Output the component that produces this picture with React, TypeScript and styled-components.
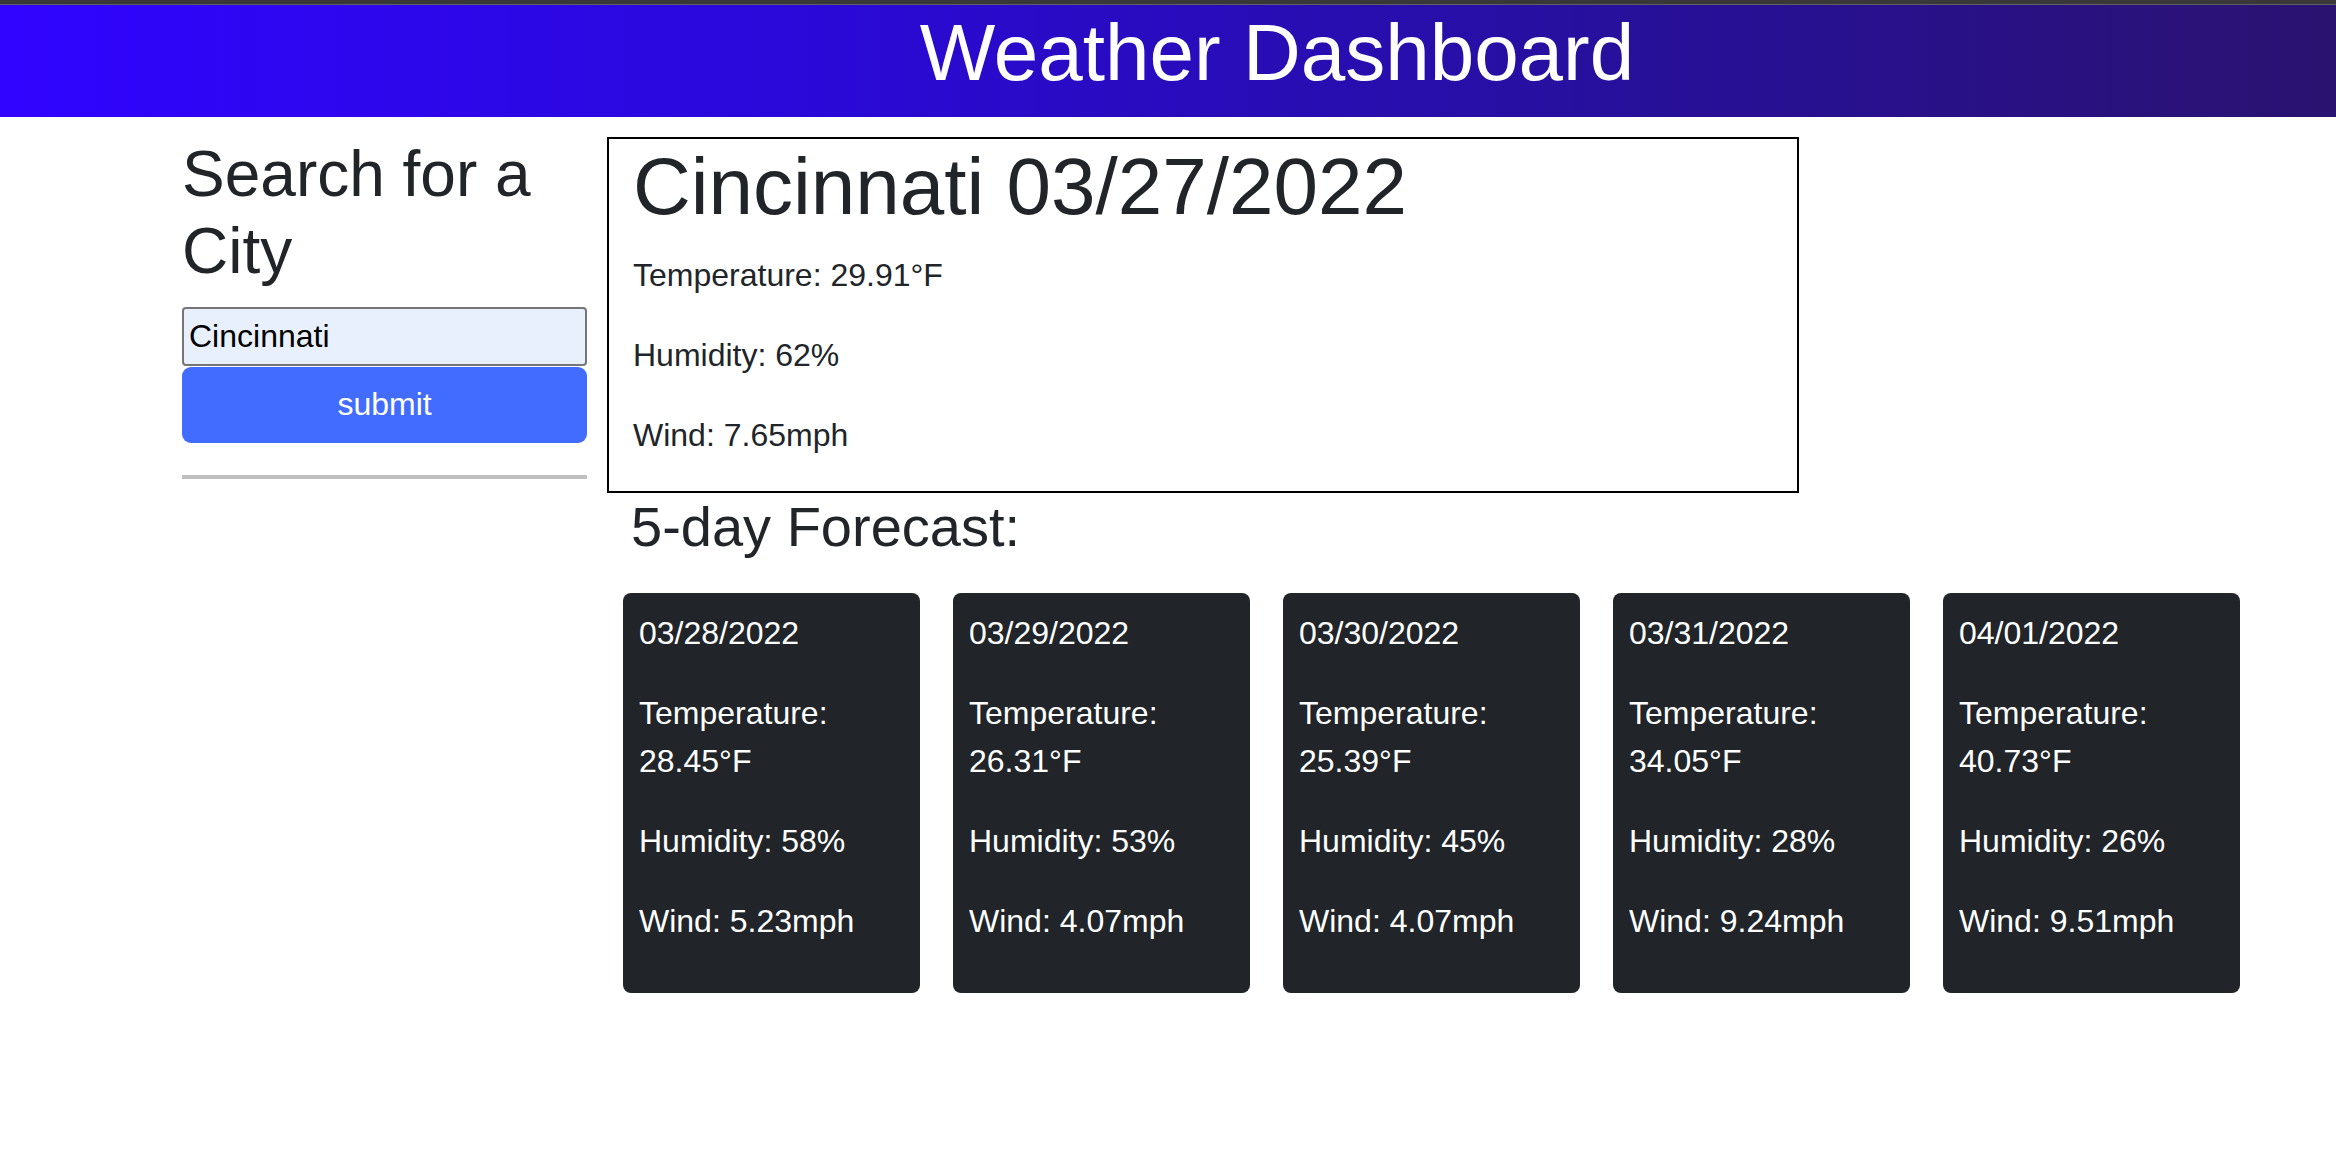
import React from "react";
import styled, { createGlobalStyle } from "styled-components";

const GlobalStyle = createGlobalStyle`
  html, body {
    margin: 0;
    padding: 0;
    background: #ffffff;
  }
  body {
    font-family: "Liberation Sans", Arial, sans-serif;
    font-size: 32px;
    line-height: 1.5;
    color: #212529;
  }
  * { box-sizing: border-box; }
`;

const Page = styled.div`
  width: 2336px;
  min-height: 1150px;
  background: #ffffff;
`;

const TopStrip = styled.div`
  height: 5px;
  background: #383838;
  border-bottom: 1px solid #5f5f66;
`;

const Header = styled.header`
  height: 112px;
  background: linear-gradient(to right, #3004ff 0%, #2a09d8 35%, #27109a 70%, #2a1270 100%);
  padding-left: 218px;
  text-align: center;
`;

const Title = styled.h1`
  margin: 0;
  font-size: 80px;
  font-weight: 400;
  line-height: 1.2;
  color: #ffffff;
`;

const Main = styled.main`
  display: flex;
  align-items: flex-start;
  gap: 20px;
  padding-left: 182px;
`;

const Sidebar = styled.aside`
  width: 405px;
  display: flex;
  flex-direction: column;
`;

const SearchHeading = styled.h2`
  margin: 19px 0 17px;
  font-size: 64px;
  font-weight: 400;
  line-height: 1.2;
`;

const CityInput = styled.input`
  height: 59px;
  width: 100%;
  border: 2px solid #767676;
  border-radius: 4px;
  background: #e8f0fe;
  padding: 0 5px;
  font-family: "Liberation Sans", Arial, sans-serif;
  font-size: 32px;
  color: #000000;
  outline: none;
`;

const SubmitButton = styled.button`
  margin-top: 1px;
  height: 76px;
  width: 100%;
  border: none;
  border-radius: 9px;
  background: #416cff;
  color: #ffffff;
  font-family: "Liberation Sans", Arial, sans-serif;
  font-size: 32px;
  cursor: pointer;
`;

const Divider = styled.hr`
  margin: 32px 0 0;
  border: none;
  height: 4px;
  background: #c0c0c0;
`;

const Content = styled.section`
  display: flex;
  flex-direction: column;
`;

const CurrentBox = styled.div`
  margin-top: 20px;
  width: 1192px;
  border: 2px solid #000000;
  padding: 0 24px;
`;

const CityTitle = styled.h1`
  margin: 0 0 16px;
  font-size: 80px;
  font-weight: 400;
  line-height: 1.2;
`;

const Stat = styled.p`
  margin: 0 0 32px;
  font-size: 32px;
  line-height: 48px;
`;

const ForecastHeading = styled.h3`
  margin: 0 0 33px;
  padding-left: 24px;
  font-size: 56px;
  font-weight: 400;
  line-height: 1.2;
`;

const CardRow = styled.div`
  display: flex;
  gap: 33px;
  margin-left: 16px;
`;

const Card = styled.div`
  width: 297px;
  height: 400px;
  background: #212529;
  color: #ffffff;
  border-radius: 8px;
  padding: 16px;
`;

const CardLine = styled.p`
  margin: 0 0 32px;
  font-size: 32px;
  line-height: 48px;
`;

type Day = { date: string; temp: string; humidity: string; wind: string };

const forecast: Day[] = [
  { date: "03/28/2022", temp: "28.45", humidity: "58", wind: "5.23" },
  { date: "03/29/2022", temp: "26.31", humidity: "53", wind: "4.07" },
  { date: "03/30/2022", temp: "25.39", humidity: "45", wind: "4.07" },
  { date: "03/31/2022", temp: "34.05", humidity: "28", wind: "9.24" },
  { date: "04/01/2022", temp: "40.73", humidity: "26", wind: "9.51" },
];

export default function App() {
  return (
    <Page>
      <GlobalStyle />
      <TopStrip />
      <Header>
        <Title>Weather Dashboard</Title>
      </Header>
      <Main>
        <Sidebar>
          <SearchHeading>Search for a City</SearchHeading>
          <CityInput defaultValue="Cincinnati" />
          <SubmitButton>submit</SubmitButton>
          <Divider />
        </Sidebar>
        <Content>
          <CurrentBox>
            <CityTitle>Cincinnati 03/27/2022</CityTitle>
            <Stat>Temperature: 29.91°F</Stat>
            <Stat>Humidity: 62%</Stat>
            <Stat>Wind: 7.65mph</Stat>
          </CurrentBox>
          <ForecastHeading>5-day Forecast:</ForecastHeading>
          <CardRow>
            {forecast.map((d) => (
              <Card key={d.date}>
                <CardLine>{d.date}</CardLine>
                <CardLine>Temperature: {d.temp}°F</CardLine>
                <CardLine>Humidity: {d.humidity}%</CardLine>
                <CardLine>Wind: {d.wind}mph</CardLine>
              </Card>
            ))}
          </CardRow>
        </Content>
      </Main>
    </Page>
  );
}
